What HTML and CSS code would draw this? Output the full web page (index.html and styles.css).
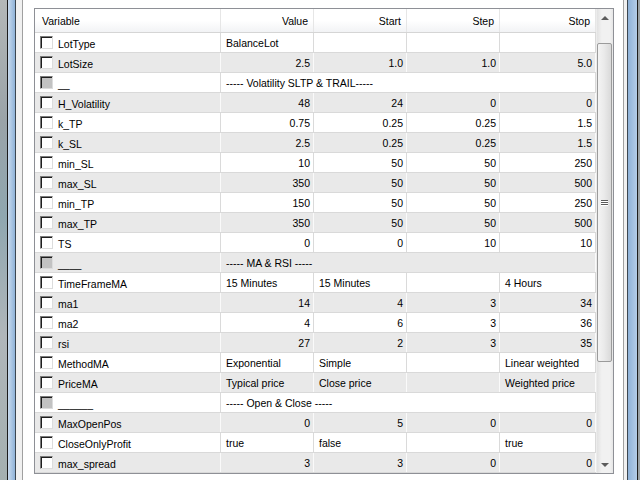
FILE: index.html
```html
<!DOCTYPE html>
<html lang="en">
<head>
	<meta charset="UTF-8">
	<title>Inputs</title>
	<link rel="stylesheet" href="styles.css">
</head>
<body>
	<div class="screen">
		<!-- left window edge -->
		<div class="desk-l"></div>
		<div class="frame-l"></div>
		<div class="dlg-l"></div>

		<div class="panel">
			<div class="listbox">
				<div class="table">
					<div class="head">
						<div class="c">Variable</div>
						<div class="c num">Value</div>
						<div class="c num">Start</div>
						<div class="c num">Step</div>
						<div class="c num">Stop</div>
					</div>

					<div class="row">
						<div class="c var"><span class="box"></span>LotType</div>
						<div class="c">BalanceLot</div>
						<div class="c"></div>
						<div class="c"></div>
						<div class="c"></div>
					</div>
					<div class="row alt">
						<div class="c var"><span class="box"></span>LotSize</div>
						<div class="c num">2.5</div>
						<div class="c num">1.0</div>
						<div class="c num">1.0</div>
						<div class="c num">5.0</div>
					</div>
					<div class="row">
						<div class="c var"><span class="box off"></span>__</div>
						<div class="c span">----- Volatility SLTP &amp; TRAIL-----</div>
					</div>
					<div class="row alt">
						<div class="c var"><span class="box"></span>H_Volatility</div>
						<div class="c num">48</div>
						<div class="c num">24</div>
						<div class="c num">0</div>
						<div class="c num">0</div>
					</div>
					<div class="row">
						<div class="c var"><span class="box"></span>k_TP</div>
						<div class="c num">0.75</div>
						<div class="c num">0.25</div>
						<div class="c num">0.25</div>
						<div class="c num">1.5</div>
					</div>
					<div class="row alt">
						<div class="c var"><span class="box"></span>k_SL</div>
						<div class="c num">2.5</div>
						<div class="c num">0.25</div>
						<div class="c num">0.25</div>
						<div class="c num">1.5</div>
					</div>
					<div class="row">
						<div class="c var"><span class="box"></span>min_SL</div>
						<div class="c num">10</div>
						<div class="c num">50</div>
						<div class="c num">50</div>
						<div class="c num">250</div>
					</div>
					<div class="row alt">
						<div class="c var"><span class="box"></span>max_SL</div>
						<div class="c num">350</div>
						<div class="c num">50</div>
						<div class="c num">50</div>
						<div class="c num">500</div>
					</div>
					<div class="row">
						<div class="c var"><span class="box"></span>min_TP</div>
						<div class="c num">150</div>
						<div class="c num">50</div>
						<div class="c num">50</div>
						<div class="c num">250</div>
					</div>
					<div class="row alt">
						<div class="c var"><span class="box"></span>max_TP</div>
						<div class="c num">350</div>
						<div class="c num">50</div>
						<div class="c num">50</div>
						<div class="c num">500</div>
					</div>
					<div class="row">
						<div class="c var"><span class="box"></span>TS</div>
						<div class="c num">0</div>
						<div class="c num">0</div>
						<div class="c num">10</div>
						<div class="c num">10</div>
					</div>
					<div class="row alt">
						<div class="c var"><span class="box off"></span>____</div>
						<div class="c span">----- MA &amp; RSI -----</div>
					</div>
					<div class="row">
						<div class="c var"><span class="box"></span>TimeFrameMA</div>
						<div class="c">15 Minutes</div>
						<div class="c">15 Minutes</div>
						<div class="c"></div>
						<div class="c">4 Hours</div>
					</div>
					<div class="row alt">
						<div class="c var"><span class="box"></span>ma1</div>
						<div class="c num">14</div>
						<div class="c num">4</div>
						<div class="c num">3</div>
						<div class="c num">34</div>
					</div>
					<div class="row">
						<div class="c var"><span class="box"></span>ma2</div>
						<div class="c num">4</div>
						<div class="c num">6</div>
						<div class="c num">3</div>
						<div class="c num">36</div>
					</div>
					<div class="row alt">
						<div class="c var"><span class="box"></span>rsi</div>
						<div class="c num">27</div>
						<div class="c num">2</div>
						<div class="c num">3</div>
						<div class="c num">35</div>
					</div>
					<div class="row">
						<div class="c var"><span class="box"></span>MethodMA</div>
						<div class="c">Exponential</div>
						<div class="c">Simple</div>
						<div class="c"></div>
						<div class="c">Linear weighted</div>
					</div>
					<div class="row alt">
						<div class="c var"><span class="box"></span>PriceMA</div>
						<div class="c">Typical price</div>
						<div class="c">Close price</div>
						<div class="c"></div>
						<div class="c">Weighted price</div>
					</div>
					<div class="row">
						<div class="c var"><span class="box off"></span>______</div>
						<div class="c span">----- Open &amp; Close -----</div>
					</div>
					<div class="row alt">
						<div class="c var"><span class="box"></span>MaxOpenPos</div>
						<div class="c num">0</div>
						<div class="c num">5</div>
						<div class="c num">0</div>
						<div class="c num">0</div>
					</div>
					<div class="row">
						<div class="c var"><span class="box"></span>CloseOnlyProfit</div>
						<div class="c">true</div>
						<div class="c">false</div>
						<div class="c"></div>
						<div class="c">true</div>
					</div>
					<div class="row alt">
						<div class="c var"><span class="box"></span>max_spread</div>
						<div class="c num">3</div>
						<div class="c num">3</div>
						<div class="c num">0</div>
						<div class="c num">0</div>
					</div>
				</div>

				<!-- vertical scrollbar -->
				<div class="vscroll">
					<div class="btn"><span class="arrow up"></span></div>
					<div class="gap"></div>
					<div class="thumb">
						<span class="grip"></span>
						<span class="grip"></span>
						<span class="grip"></span>
					</div>
					<div class="track"></div>
					<div class="btn"><span class="arrow down"></span></div>
				</div>
			</div>
		</div>

		<!-- right window edge -->
		<div class="dlg-r"></div>
		<div class="frame-r"></div>
		<div class="desk-r"></div>
	</div>
</body>
</html>
```

FILE: styles.css
```css
* {
	margin: 0;
	padding: 0;
	box-sizing: border-box;
}
body {
	font-family: "Liberation Sans", Arial, sans-serif;
	font-size: 10.5px;
	color: #000;
	background: #fff;
}
.screen {
	display: flex;
	width: 640px;
	height: 480px;
	overflow: hidden;
}

/* window edges */
.desk-l {
	width: 7px;
	background: linear-gradient(#b4b8b8, #9aa3a8 25%, #8fa7b0 45%, #b0b6ba 70%, #a4b0b0);
}
.frame-l {
	width: 9px;
	border-left: 1px solid #1c1c1c;
	border-right: 1px solid #3c4650;
	background: linear-gradient(to right, #c9dbee, #8fb2d8);
}
.dlg-l {
	width: 7px;
	background: #f0f0f0;
	border-right: 1px solid #a0a0a0;
}
.dlg-r {
	width: 4px;
	background: #f0f0f0;
	border-left: 1px solid #a0a0a0;
}
.frame-r {
	width: 11px;
	border-left: 1px solid #3c4650;
	border-right: 1px solid #1c1c1c;
	background: linear-gradient(to right, #8fb2d8, #b3cce8);
}
.desk-r {
	width: 2px;
	background: #9ba2a6;
}

.panel {
	width: 600px;
	background: #fff;
	padding: 8px 9px 6px 11px;
}
.listbox {
	display: flex;
	width: 580px;
	height: 466px;
	border: 1px solid #8e9096;
}
.table {
	width: 561px;
}

/* header */
.head {
	display: grid;
	grid-template-columns: 186px 93px 93px 93px 96px;
	height: 24px;
	border-bottom: 1px solid #d5d5d5;
	background: linear-gradient(#fff, #fff 50%, #f2f3f5);
}
.head .c {
	line-height: 21px;
	border-right-color: #e6e6e6;
	padding: 2px 5px 0 7px;
}

/* rows */
.row {
	display: grid;
	grid-template-columns: 186px 93px 93px 93px 96px;
	height: 20px;
	border-bottom: 1px solid #d9d9d9;
	background: #fff;
}
.row.alt {
	background: #e9e9e9;
}
.c {
	border-right: 1px solid #dadada;
	padding: 1px 3px 0 5px;
	line-height: 18px;
	white-space: nowrap;
	overflow: hidden;
}
.alt .c {
	border-right-color: #fafafa;
}
.num {
	text-align: right;
}
.span {
	grid-column: 2 / 6;
}
.var {
	display: flex;
	align-items: center;
	gap: 5px;
	padding-top: 2px;
}
.box {
	width: 13px;
	height: 13px;
	flex: none;
	margin-top: -2px;
	background: #fff;
	border: 1px solid;
	border-color: #7a7a7a #dcdcdc #dcdcdc #7a7a7a;
	box-shadow: inset 1px 1px 0 #1e1e1e;
}
.box.off {
	background: #c2c2c2;
}

/* scrollbar */
.vscroll {
	width: 17px;
	display: flex;
	flex-direction: column;
	background: linear-gradient(to right, #e2e2e2, #f1f1f1 30%, #f1f1f1 80%, #e6e6e6);
	border-left: 1px solid #ececec;
}
.btn {
	height: 17px;
	display: flex;
	align-items: center;
	justify-content: center;
}
.arrow {
	width: 0;
	height: 0;
	border-left: 4px solid transparent;
	border-right: 4px solid transparent;
}
.arrow.up {
	border-bottom: 4px solid #5c5c5c;
}
.arrow.down {
	border-top: 4px solid #5c5c5c;
}
.gap {
	height: 17px;
}
.thumb {
	height: 319px;
	margin: 0 1px 0 0;
	border: 1px solid #9b9b9b;
	border-radius: 2px;
	background: linear-gradient(to right, #f4f4f4, #e9e9e9 50%, #d9d9d9);
	display: flex;
	flex-direction: column;
	align-items: center;
	justify-content: center;
	gap: 1px;
}
.grip {
	width: 7px;
	height: 1px;
	background: #5a5a5a;
	box-shadow: 0 1px 0 #fff;
}
.track {
	flex: 1;
}
```
